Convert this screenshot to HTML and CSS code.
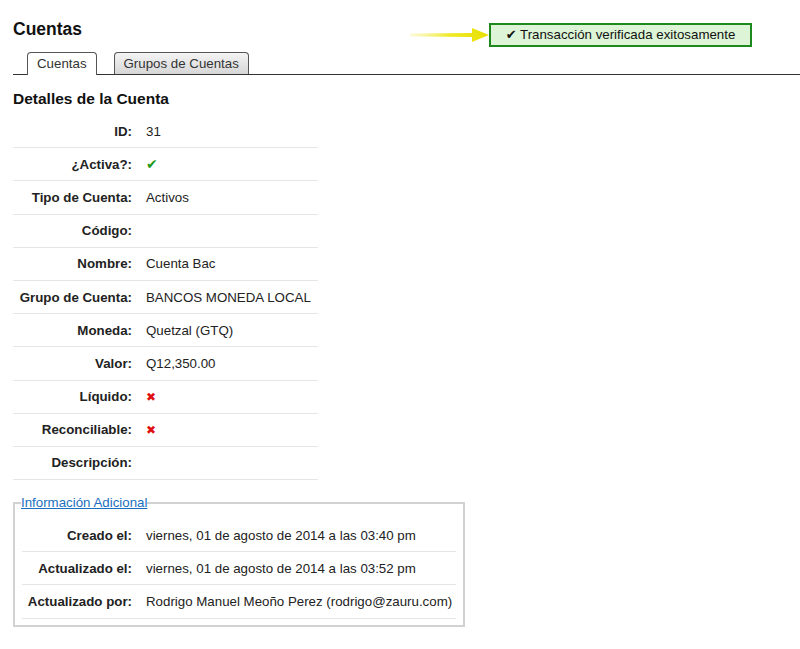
FILE: index.html
```html
<!DOCTYPE html>
<html lang="es">
<head>
    <meta charset="UTF-8">
    <meta name="viewport" content="width=device-width, initial-scale=1.0">
    <title>Cuentas</title>
    <link rel="stylesheet" href="styles.css">
</head>
<body>
<div class="page">
    <h1>Cuentas</h1>

    <div class="flash">
        <svg class="flash-arrow" width="80" height="16" viewBox="0 0 80 16">
            <defs>
                <linearGradient id="arrowFill" x1="0" x2="1" y1="0" y2="0">
                    <stop offset="0" stop-color="#f4f07a" stop-opacity="0.3"/>
                    <stop offset="0.5" stop-color="#f0ea2a"/>
                    <stop offset="1" stop-color="#e8e000"/>
                </linearGradient>
            </defs>
            <path d="M0 6.5 L62 6 L62 1 L79 8 L62 15 L62 10 L0 9.5 Z" fill="url(#arrowFill)"/>
        </svg>
        <div class="flash-box"><span class="flash-check">&#10004;</span> Transacción verificada exitosamente</div>
    </div>

    <ul class="tabs">
        <li class="tab active">Cuentas</li>
        <li class="tab">Grupos de Cuentas</li>
    </ul>

    <h2>Detalles de la Cuenta</h2>
    <table class="details">
        <tr><td class="label">ID:</td><td>31</td></tr>
        <tr><td class="label">¿Activa?:</td><td><span class="yes">&#10004;</span></td></tr>
        <tr><td class="label">Tipo de Cuenta:</td><td>Activos</td></tr>
        <tr><td class="label">Código:</td><td></td></tr>
        <tr><td class="label">Nombre:</td><td>Cuenta Bac</td></tr>
        <tr><td class="label">Grupo de Cuenta:</td><td>BANCOS MONEDA LOCAL</td></tr>
        <tr><td class="label">Moneda:</td><td>Quetzal (GTQ)</td></tr>
        <tr><td class="label">Valor:</td><td>Q12,350.00</td></tr>
        <tr><td class="label">Líquido:</td><td><span class="no">&#10006;</span></td></tr>
        <tr><td class="label">Reconciliable:</td><td><span class="no">&#10006;</span></td></tr>
        <tr><td class="label">Descripción:</td><td></td></tr>
    </table>

    <fieldset class="extra">
        <legend><a href="#">Información Adicional</a></legend>
        <table class="details inner">
            <tr><td class="label">Creado el:</td><td>viernes, 01 de agosto de 2014 a las 03:40 pm</td></tr>
            <tr><td class="label">Actualizado el:</td><td>viernes, 01 de agosto de 2014 a las 03:52 pm</td></tr>
            <tr><td class="label">Actualizado por:</td><td>Rodrigo Manuel Meoño Perez (rodrigo@zauru.com)</td></tr>
        </table>
    </fieldset>
</div>
</body>
</html>
```

FILE: styles.css
```css
body {
    font-family: "Liberation Sans", Arial, sans-serif;
    font-size: 13.3px;
    color: #222;
    background-color: white;
    margin: 0;
}

.page {
    position: relative;
    padding: 18px 0 0 13px;
}

h1 {
    font-size: 17.5px;
    line-height: 22px;
    margin: 0;
    color: #111;
}

.flash {
    position: absolute;
    top: 23px;
    left: 410px;
    display: flex;
    align-items: center;
}

.flash-arrow {
    display: block;
    margin-right: -1px;
}

.flash-box {
    width: 259px;
    height: 20px;
    line-height: 20px;
    text-align: center;
    background-color: #ddf5d6;
    border: 2px solid #1e8a1e;
    color: #111;
}

.flash-check {
    font-family: "DejaVu Sans", sans-serif;
    font-size: 13px;
}

.tabs {
    display: flex;
    gap: 17px;
    list-style: none;
    margin: 12px 0 0 0;
    padding: 0 0 0 14px;
    border-bottom: 1px solid #333;
    height: 22px;
}

.tab {
    height: 21px;
    line-height: 21px;
    padding: 0 9px;
    border: 1px solid #555;
    border-bottom: none;
    border-radius: 4px 4px 0 0;
    background: linear-gradient(#f4f4f4, #d6d6d6);
    color: #333;
}

.tab.active {
    background: white;
    height: 22px;
}

h2 {
    font-size: 15.5px;
    line-height: 18px;
    margin: 15px 0 0 0;
    color: #111;
}

.details {
    border-collapse: collapse;
    width: 305px;
    margin-top: 7px;
}

.details td {
    height: 32.2px;
    padding: 0;
    border-bottom: 1px solid #e6e6e6;
    vertical-align: middle;
}

.details td.label {
    width: 119px;
    padding-right: 14px;
    text-align: right;
    font-weight: bold;
    color: #222;
}

.yes,
.no {
    font-family: "DejaVu Sans", sans-serif;
}

.yes {
    font-size: 14px;
    color: #1e9a1e;
}

.no {
    font-size: 12px;
    color: #e01010;
}

.extra {
    width: 434px;
    margin: 15px 0 0 0;
    padding: 9px 7px 6px 7px;
    border: 2px solid #d2d2d2;
}

.extra legend {
    padding: 0;
    margin-left: -1px;
}

.extra legend a {
    color: #1a6fc0;
}

.details.inner {
    width: 100%;
    margin-top: 0;
}

.details.inner td.label {
    width: 110px;
}
```
